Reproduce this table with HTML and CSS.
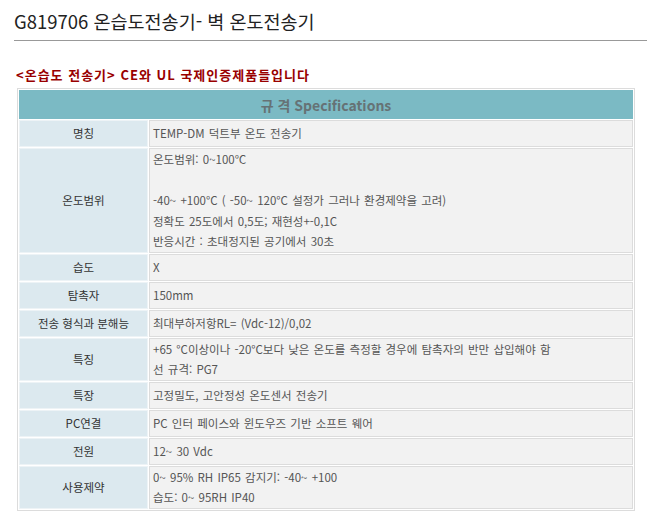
FILE: index.html
```html
<!DOCTYPE html>
<html lang="ko">
<head>
<meta charset="utf-8">
<title>G819706 온습도전송기- 벽 온도전송기</title>
<link rel="stylesheet" href="styles.css">
</head>
<body>
<div class="page">
  <h1 class="title">G819706 온습도전송기- 벽 온도전송기</h1>
  <p class="notice">&lt;온습도 전송기&gt; CE와 UL 국제인증제품들입니다</p>
  <table class="spec">
    <colgroup><col class="col-label"><col class="col-value"></colgroup>
    <tr class="head"><th colspan="2">규 격 Specifications</th></tr>
    <tr><td class="label">명칭</td><td class="value">TEMP-DM 덕트부 온도 전송기</td></tr>
    <tr><td class="label">온도범위</td><td class="value">온도범위: 0~100℃<br><br>-40~ +100°C ( -50~ 120°C 설정가 그러나 환경제약을 고려)<br>정확도 25도에서 0,5도; 재현성+-0,1C<br>반응시간 : 초대정지된 공기에서 30초</td></tr>
    <tr><td class="label">습도</td><td class="value">X</td></tr>
    <tr><td class="label">탐촉자</td><td class="value">150mm</td></tr>
    <tr><td class="label">전송 형식과 분해능</td><td class="value">최대부하저항RL= (Vdc-12)/0,02</td></tr>
    <tr><td class="label">특징</td><td class="value">+65 °C이상이나 -20°C보다 낮은 온도를 측정할 경우에 탐촉자의 반만 삽입해야 함<br>선 규격: PG7</td></tr>
    <tr><td class="label">특장</td><td class="value">고정밀도, 고안정성 온도센서 전송기</td></tr>
    <tr><td class="label">PC연결</td><td class="value">PC 인터 페이스와 윈도우즈 기반 소프트 웨어</td></tr>
    <tr><td class="label">전원</td><td class="value">12~ 30 Vdc</td></tr>
    <tr><td class="label">사용제약</td><td class="value">0~ 95% RH IP65 감지기: -40~ +100<br>습도: 0~ 95RH IP40</td></tr>
  </table>
</div>
</body>
</html>
```
FILE: styles.css
```css
html, body {
  margin: 0;
  padding: 0;
  background: #fff;
}
body {
  font-family: "Noto Sans CJK KR", "Noto Sans", sans-serif;
  font-size: 11.5px;
  color: #555;
}
.page {
  padding: 0 0 0 14px;
}
.title {
  margin: 0;
  padding: 9px 0 7px 0;
  font-size: 18.5px;
  line-height: 24px;
  font-weight: normal;
  color: #222;
  border-bottom: 1px solid #999;
}
.notice {
  margin: 24px 0 0 2px;
  font-size: 13px;
  line-height: 20px;
  letter-spacing: 1px;
  font-weight: bold;
  color: #900;
}
.spec {
  margin: 3px 0 0 3px;
  width: 618px;
  border: 1px solid #dcdcdc;
  border-collapse: separate;
  border-spacing: 1px;
  table-layout: fixed;
}
.col-label {
  width: 129px;
}
.spec tr {
  height: 27px;
}
.spec th {
  height: 27px;
  padding: 0;
  background: #7bbac4;
  border: 1px solid #7bbac4;
  color: #667275;
  font-size: 14px;
  font-weight: bold;
  text-align: center;
}
.spec td {
  padding: 0 3px;
  line-height: 20.5px;
}
.spec .label {
  background: #dce9ef;
  border: 1px solid #edf3f6;
  color: #333;
  text-align: center;
}
.spec .value {
  background: #f2f2f2;
  border: 1px solid #dcdcdc;
  color: #555;
  text-align: left;
  word-spacing: 1px;
}
```
